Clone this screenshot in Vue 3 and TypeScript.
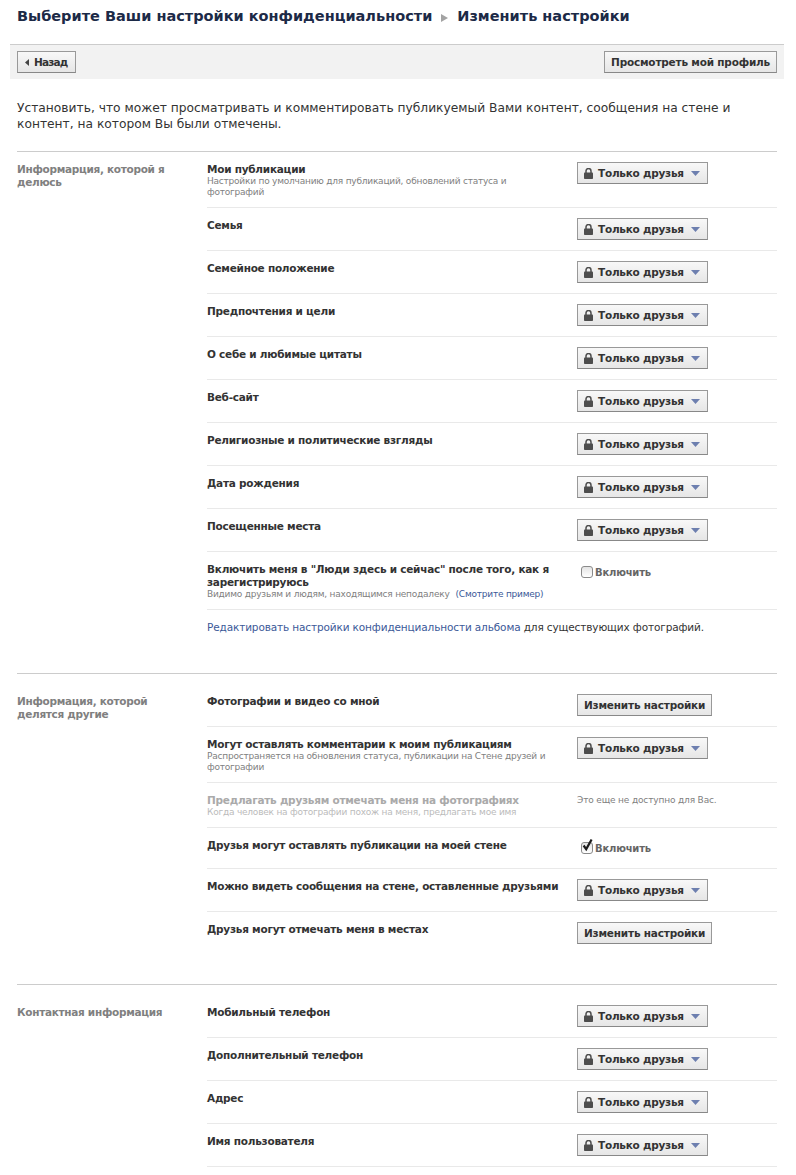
<script setup lang="ts">
type Row = {
  label: string
  sub?: string
  subLink?: string
  control: 'privacy' | 'edit' | 'off' | 'on' | 'na'
  muted?: boolean
}
type Section = { title: string; rows: Row[]; first?: boolean; note?: boolean; tail?: boolean }

const sections: Section[] = [
  {
    title: 'Информарция, которой я делюсь',
    first: true,
    note: true,
    rows: [
      { label: 'Мои публикации', sub: 'Настройки по умолчанию для публикаций, обновлений статуса и фотографий', control: 'privacy' },
      { label: 'Семья', control: 'privacy' },
      { label: 'Семейное положение', control: 'privacy' },
      { label: 'Предпочтения и цели', control: 'privacy' },
      { label: 'О себе и любимые цитаты', control: 'privacy' },
      { label: 'Веб-сайт', control: 'privacy' },
      { label: 'Религиозные и политические взгляды', control: 'privacy' },
      { label: 'Дата рождения', control: 'privacy' },
      { label: 'Посещенные места', control: 'privacy' },
      { label: 'Включить меня в "Люди здесь и сейчас" после того, как я зарегистрируюсь', sub: 'Видимо друзьям и людям, находящимся неподалеку', subLink: '(Смотрите пример)', control: 'off' },
    ],
  },
  {
    title: 'Информация, которой делятся другие',
    tail: true,
    rows: [
      { label: 'Фотографии и видео со мной', control: 'edit' },
      { label: 'Могут оставлять комментарии к моим публикациям', sub: 'Распространяется на обновления статуса, публикации на Стене друзей и фотографии', control: 'privacy' },
      { label: 'Предлагать друзьям отмечать меня на фотографиях', sub: 'Когда человек на фотографии похож на меня, предлагать мое имя', control: 'na', muted: true },
      { label: 'Друзья могут оставлять публикации на моей стене', control: 'on' },
      { label: 'Можно видеть сообщения на стене, оставленные друзьями', control: 'privacy' },
      { label: 'Друзья могут отмечать меня в местах', control: 'edit' },
    ],
  },
  {
    title: 'Контактная информация',
    rows: [
      { label: 'Мобильный телефон', control: 'privacy' },
      { label: 'Дополнительный телефон', control: 'privacy' },
      { label: 'Адрес', control: 'privacy' },
      { label: 'Имя пользователя', control: 'privacy' },
    ],
  },
]
</script>

<template>
  <div class="page">
    <h1 class="title">
      <span>Выберите Ваши настройки конфиденциальности</span>
      <svg class="crumb" width="7" height="8" viewBox="0 0 7 8"><path d="M0 0l7 4-7 4z" fill="#a3a3a3" /></svg>
      <span>Изменить настройки</span>
    </h1>

    <div class="bar">
      <button class="btn back">
        <svg class="ico" width="4" height="7" viewBox="0 0 4 7"><path d="M4 0v7L0 3.5z" fill="#444" /></svg>
        Назад
      </button>
      <button class="btn">Просмотреть мой профиль</button>
    </div>

    <p class="intro">Установить, что может просматривать и комментировать публикуемый Вами контент, сообщения на стене и контент, на котором Вы были отмечены.</p>

    <section v-for="s in sections" :key="s.title" class="section" :class="{ first: s.first, tail: s.tail, noted: s.note }">
      <h2 class="side">{{ s.title }}</h2>
      <div class="rows">
        <div v-for="r in s.rows" :key="r.label" class="row" :class="{ muted: r.muted }">
          <div class="text">
            <div class="label">{{ r.label }}</div>
            <div v-if="r.sub" class="sub">{{ r.sub }}<a v-if="r.subLink" class="sublink">{{ r.subLink }}</a></div>
          </div>
          <div class="control">
            <button v-if="r.control === 'privacy'" class="btn privacy">
              <svg class="ico lock" width="9" height="11" viewBox="0 0 9 11">
                <path d="M2 5V3a2.500 2.500 0 0 1 5 0V5" fill="none" stroke="#4d4d4d" stroke-width="1.500" />
                <rect x="0" y="4.600" width="9" height="6.400" rx="0.800" fill="#4d4d4d" />
              </svg>
              <span>Только друзья</span>
              <svg class="ico caret" width="9" height="5" viewBox="0 0 9 5"><path d="M0 0h9L4.500 5z" fill="#6d7faf" /></svg>
            </button>
            <button v-else-if="r.control === 'edit'" class="btn">Изменить настройки</button>
            <div v-else-if="r.control === 'off' || r.control === 'on'" class="check" :class="r.control">
              <span class="box">
                <svg v-if="r.control === 'on'" class="tick" width="13" height="14" viewBox="0 0 13 14"><path d="M2.600 7.500l2.600 3.600L10.600 1.500" fill="none" stroke="#1c1c1c" stroke-width="2.200" /></svg>
              </span>
              <span>Включить</span>
            </div>
            <div v-else class="na">Это еще не доступно для Вас.</div>
          </div>
        </div>
        <p v-if="s.note" class="album"><a>Редактировать настройки конфиденциальности альбома</a> для существующих фотографий.</p>
      </div>
    </section>
  </div>
</template>

<style>
html, body { margin: 0; background: #fff; }
</style>

<style scoped>
.page {
  width: 796px;
  height: 1175px;
  overflow: hidden;
  box-sizing: border-box;
  padding: 0 19px 0 17px;
  font-family: "DejaVu Sans", sans-serif;
  color: #333;
}
.title {
  margin: 0;
  height: 44px;
  box-sizing: border-box;
  padding-top: 6px;
  display: flex;
  align-items: flex-start;
  gap: 9px;
  font-size: 14.5px;
  line-height: 21px;
  font-weight: 700;
  color: #1c2a47;
}
.crumb { margin-top: 8px; }
.bar {
  margin: 0 -7px;
  height: 35px;
  box-sizing: border-box;
  border-top: 1px solid #ccc;
  background: #f2f2f2;
  padding: 6px 7px 0;
  display: flex;
  justify-content: space-between;
  align-items: flex-start;
}
.btn {
  height: 22px;
  box-sizing: border-box;
  margin: 0;
  padding: 0 6px;
  border: 1px solid #999;
  border-bottom-color: #888;
  border-radius: 0;
  background: linear-gradient(#f8f8f8, #e6e6e6);
  font-family: inherit;
  font-size: 10.5px;
  letter-spacing: -0.2px;
  font-weight: 700;
  line-height: 20px;
  color: #333;
  display: inline-flex;
  align-items: center;
  white-space: nowrap;
}
.ico { flex: none; }
.back { gap: 5px; padding: 0 7px; letter-spacing: -0.8px; }
.privacy { width: 131px; padding: 0 5px; gap: 5px; letter-spacing: -0.25px; }
.lock { margin-left: 1px; }
.caret { margin-left: 2px; }
.intro {
  margin: 21px 0 19px;
  font-size: 12.25px;
  line-height: 16px;
  color: #333;
  width: 740px;
}
.section {
  display: flex;
  border-top: 1px solid #ccc;
  padding-top: 20px;
}
.section.first { padding-top: 10px; }
.section.noted { padding-bottom: 39px; }
.section.tail { padding-bottom: 40px; }
.side {
  flex: 0 0 190px;
  margin: 0;
  padding: 1px 30px 0 0;
  box-sizing: border-box;
  font-size: 10.5px;
  letter-spacing: -0.3px;
  line-height: 13px;
  font-weight: 700;
  color: #808080;
}
.rows { flex: 1; min-width: 0; }
.row {
  display: flex;
  justify-content: space-between;
  border-bottom: 1px solid #e9e9e9;
  padding-bottom: 10px;
  margin-bottom: 10px;
}
.section.tail .row:last-child { border-bottom: 0; padding-bottom: 0; margin-bottom: 0; }
.text { width: 370px; padding-top: 1px; }
.label {
  font-size: 10.5px;
  letter-spacing: -0.25px;
  line-height: 13px;
  font-weight: 700;
  color: #333;
}
.sub {
  max-width: 345px;
  margin-bottom: -1px;
  font-size: 9px;
  letter-spacing: -0.22px;
  line-height: 11px;
  color: #808080;
}
.sublink { color: #3b5998; margin-left: 6px; }
.control { width: 200px; }
.muted .label { color: #aaa; }
.muted .sub { color: #bbb; }
.check {
  height: 20px;
  display: flex;
  align-items: center;
  gap: 2px;
  padding-left: 4px;
  font-size: 10px;
  letter-spacing: -0.2px;
  font-weight: 700;
  color: #666;
}
.box {
  position: relative;
  box-sizing: border-box;
  width: 12px;
  height: 12px;
  border: 1px solid #8a8a8a;
  border-radius: 3px;
  background: linear-gradient(#e4e4e4, #fff);
}
.tick { position: absolute; left: -1px; top: -5px; }
.na { padding-top: 1px; font-size: 9px; letter-spacing: -0.15px; line-height: 13px; color: #808080; }
.album { margin: 0; font-size: 10.5px; letter-spacing: -0.13px; line-height: 14px; color: #333; }
.album a { color: #3b5998; }
</style>
